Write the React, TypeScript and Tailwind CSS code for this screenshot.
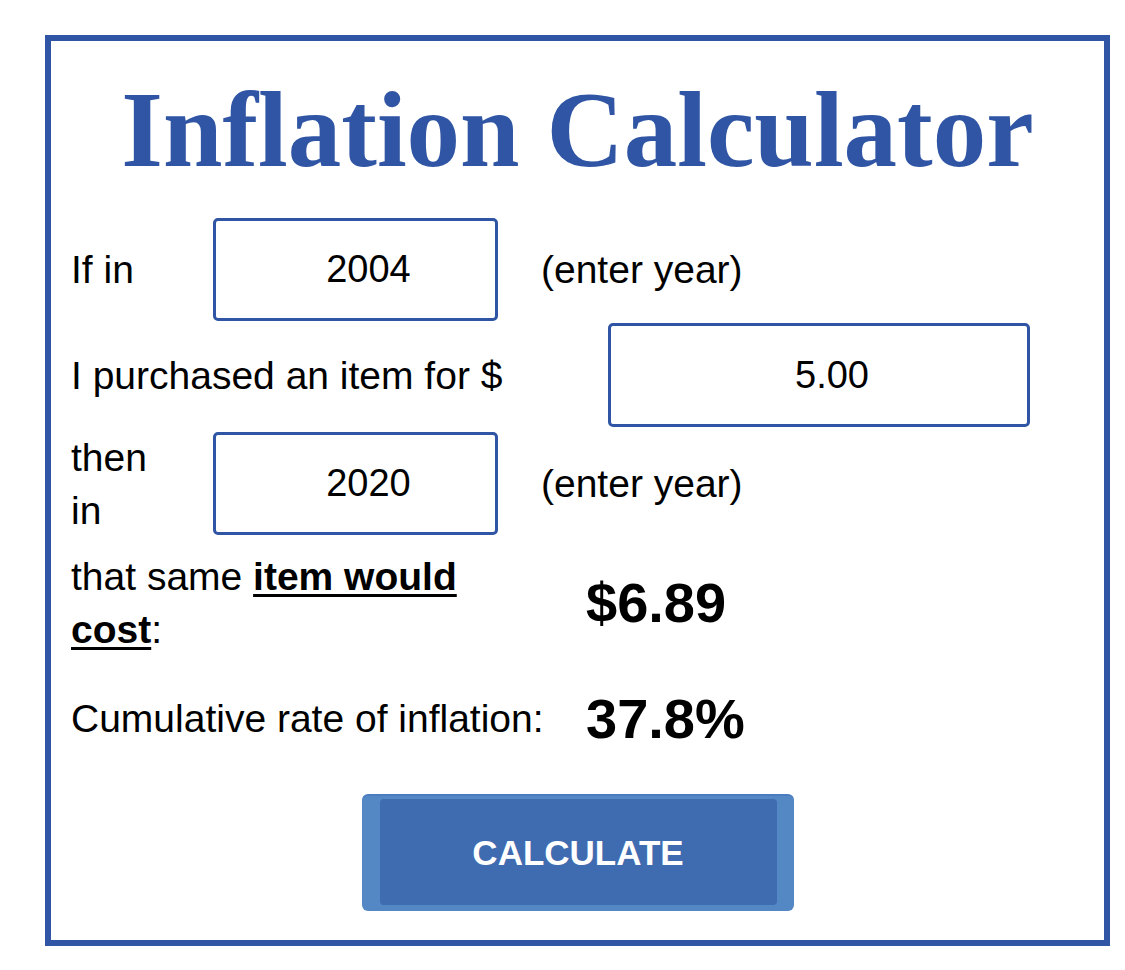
export default function App() {
  const sans = { fontFamily: '"Liberation Sans", Arial, sans-serif' };

  return (
    <div className="min-h-[970px] w-[1125px] bg-white pt-[35px] pl-[45px]" style={sans}>
      <div className="w-[1065px] h-[911px] border-[6px] border-[#2f55a4] pl-[20px] text-black text-[39px] leading-[53px]">
        {/* Title */}
        <h1
          className="mt-[36px] h-[107px] text-center text-[107px] leading-none font-bold text-[#2f55a4] -ml-[20px]"
          style={{ fontFamily: '"Liberation Serif", "Times New Roman", serif' }}
        >
          Inflation Calculator
        </h1>

        {/* Start year */}
        <div className="mt-[34px] flex h-[103px] items-center">
          <div className="w-[142px]">If in</div>
          <div className="flex h-[103px] w-[285px] items-center justify-center rounded-[5px] border-[3px] border-[#2f55a4] pl-[26px] text-[38px]">
            2004
          </div>
          <div className="ml-[43px]">(enter year)</div>
        </div>

        {/* Amount */}
        <div className="mt-[2px] flex h-[104px] items-center">
          <div className="w-[537px]">I purchased an item for $</div>
          <div className="flex h-[104px] w-[422px] items-center justify-center rounded-[5px] border-[3px] border-[#2f55a4] pl-[26px] text-[38px]">
            5.00
          </div>
        </div>

        {/* End year */}
        <div className="mt-[5px] flex h-[103px] items-center">
          <div className="w-[142px] pr-[50px]">then in</div>
          <div className="flex h-[103px] w-[285px] items-center justify-center rounded-[5px] border-[3px] border-[#2f55a4] pl-[26px] text-[38px]">
            2020
          </div>
          <div className="ml-[43px]">(enter year)</div>
        </div>

        {/* Result */}
        <div className="mt-[15px] flex h-[106px] items-center">
          <div className="w-[427px]">
            that same <b className="underline underline-offset-[4px] decoration-[3px]">item would cost</b>:
          </div>
          <div className="ml-[88px] text-[56px] font-bold leading-none">$6.89</div>
        </div>

        <div className="mt-[36px] flex h-[53px] items-center">
          <div className="w-[515px]">Cumulative rate of inflation:</div>
          <div className="text-[56px] font-bold leading-none">37.8%</div>
        </div>

        {/* Button */}
        <div className="-ml-[20px] mt-[49px] flex justify-center">
          <button className="h-[117px] w-[432px] rounded-[6px] border-t-[2px] border-[#4a7cbf] bg-[#5488c5] pt-[3px] pb-[6px] pl-[18px] pr-[17px]">
            <div className="flex h-full w-full items-center justify-center rounded-[4px] bg-[#3f6bb1] text-[35px] font-bold text-white">
              CALCULATE
            </div>
          </button>
        </div>
      </div>
    </div>
  );
}
